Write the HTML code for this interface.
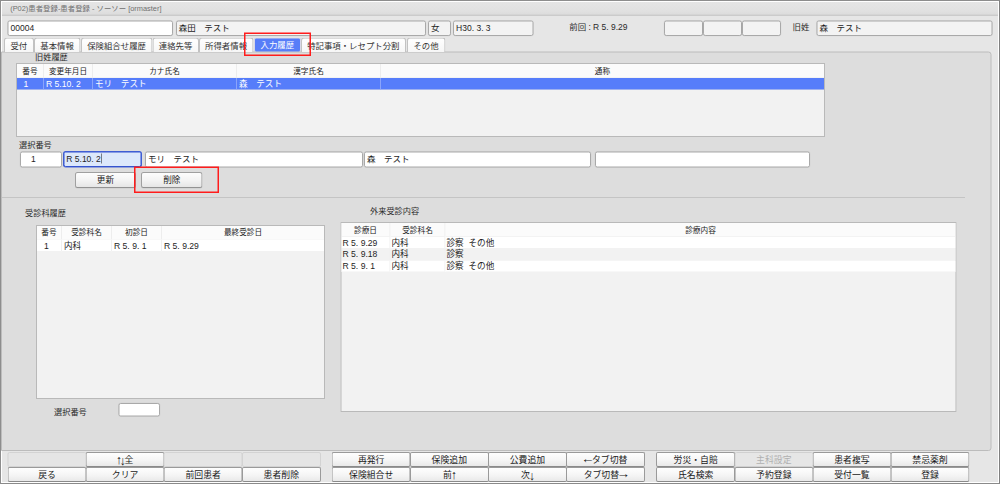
<!DOCTYPE html>
<html lang="ja"><head><meta charset="utf-8"><title>患者登録</title>
<style>
*{box-sizing:border-box;margin:0;padding:0}
html,body{width:1000px;height:484px;overflow:hidden;background:#e6e6e6}
body{position:relative;font-family:"Liberation Sans","Noto Sans CJK JP",sans-serif;font-size:8.5px;color:#1e1e1e;line-height:1}
.a{position:absolute;white-space:pre}
#root{position:absolute;left:0;top:0;width:1000px;height:484px;zoom:2;transform:scale(0.5);transform-origin:0 0}
#win{left:0;top:0;width:1000px;height:484px;border:1px solid #8d8d8d;border-right-color:#808080;border-bottom-color:#8a8a8a;background:#e6e6e6;box-shadow:inset 0 0 0 1px #fff}
#title{left:2px;top:2px;width:996px;height:14.2px;background:linear-gradient(#e5e5e5,#e1e1e1 60%,#dddddd 84%,#d4d4d4 90%,#cbcbcb 94%,#cbcbcb)}
#title span{left:8.2px;top:2.4px;color:#707070;font-size:7.4px}
.in{border:1px solid #a9a9a9;border-radius:2.2px;background:#f3f3f3;height:15.5px;line-height:12.6px;padding-left:2px;font-size:8.5px;box-shadow:0 0 0 0.5px rgba(0,0,0,0.03)}
.w{background:#fff}
.tab{top:37.3px;height:14.5px;border:1px solid #c2c2c2;border-bottom:none;border-radius:3px 3px 0 0;background:linear-gradient(#fff,#f6f6f6);text-align:center;line-height:14.6px;font-size:8.4px;color:#333}
.tab.sel{background:#577df8;color:#fff;border-color:#d8d8e8;border-radius:2px}
#panel{left:1px;top:51.5px;width:990.3px;height:399.3px;background:#dddddd;border:1px solid #bcbcbc;border-radius:0 3px 3px 0}
.tbl{background:#f2f2f2;border:1px solid #b9b9b9}
.th{top:0;height:13px;background:#fbfbfb;text-align:center;font-size:7.65px;line-height:13px;border-right:1px solid #ededed;color:#222;box-shadow:inset 0 -0.5px 0 #ebebeb}
.td{height:12px;line-height:12px;font-size:8.6px;padding-left:2px;border-right:1px solid #f0f0f0;background:#fff;box-shadow:inset 0 -0.5px 0 rgba(0,0,0,0.06)}
.lbl{font-size:8.2px;color:#2a2a2a}
.btn{height:15.8px;border:1px solid #a0a0a0;border-bottom-color:#939393;border-radius:2.5px;background:linear-gradient(#fdfdfd,#f4f4f4 50%,#e6e6e6);text-align:center;line-height:13px;font-size:8.6px;color:#1a1a1a;box-shadow:0 0.5px 0 rgba(0,0,0,0.08)}
.fb{height:15px;border:1px solid #9a9a9a;border-bottom-color:#8a8a8a;border-radius:2px;background:linear-gradient(#fefefe,#f5f5f5 55%,#e9e9e9);text-align:center;line-height:14px;font-size:8.85px;color:#1a1a1a;overflow:hidden}
.av{font-family:"Liberation Sans",sans-serif;font-size:12.4px;line-height:8px;display:inline-block;width:3.9px;text-indent:-1.1px;vertical-align:-0.8px}
.av.dn{vertical-align:-1.9px}
.ah{font-family:"Liberation Sans",sans-serif;font-size:13.5px;line-height:8px;display:inline-block;width:8.3px;text-indent:-2.6px;vertical-align:0px}
.fb.e{background:#e5e5e5;border-color:#d3d3d3}
.fb.d{background:#e6e6e6;border-color:#d0d0d0;color:#b0b0b0}
.red{border:1.75px solid #ff1c1c}
</style></head>
<body>
<div id="root">
<div class="a" id="win"></div>
<div class="a" id="title"><span class="a">(P02)患者登録-患者登録 - ソーソー [ormaster]</span></div>
<div class="a in w" style="left:7.5px;top:20.5px;width:165.3px;">00004</div>
<div class="a in " style="left:175.8px;top:20.5px;width:250.2px;">森田　テスト</div>
<div class="a in " style="left:428.0px;top:20.5px;width:23.0px;">女</div>
<div class="a in " style="left:453.1px;top:20.5px;width:80.39999999999998px;">H30. 3. 3</div>
<div class="a lbl" style="left:569.2px;top:23.5px;font-size:8.45px">前回 : R 5. 9.29</div>
<div class="a in " style="left:664.1px;top:20.5px;width:39.10000000000002px;"></div>
<div class="a in " style="left:703.1px;top:20.5px;width:39.10000000000002px;"></div>
<div class="a in " style="left:742.1px;top:20.5px;width:39.10000000000002px;"></div>
<div class="a lbl" style="left:792.5px;top:23.5px;font-size:8.45px">旧姓</div>
<div class="a in " style="left:816.5px;top:20.5px;width:176.20000000000005px;">森　テスト</div>
<div class="a" id="panel"></div>
<div class="a tab" style="left:3.8px;width:30.0px;">受付</div>
<div class="a tab" style="left:33.8px;width:46.5px;">基本情報</div>
<div class="a tab" style="left:80.8px;width:71.5px;">保険組合せ履歴</div>
<div class="a tab" style="left:152.3px;width:46.5px;">連絡先等</div>
<div class="a tab" style="left:198.8px;width:54.5px;">所得者情報</div>
<div class="a tab sel" style="left:253.8px;width:47.0px;top:37.6px;height:14.1px;line-height:14.3px;">入力履歴</div>
<div class="a tab" style="left:300.8px;width:105.0px;">特記事項・レセプト分割</div>
<div class="a tab" style="left:406.8px;width:38.5px;">その他</div>
<div class="a red" style="left:244px;top:32.5px;width:67px;height:23.5px"></div>
<div class="a lbl" style="left:35px;top:52.8px">旧姓履歴</div>
<div class="a tbl" style="left:16px;top:63px;width:809px;height:74px">
<div class="a th" style="left:0px;width:27px;height:14px;line-height:14px;">番号</div>
<div class="a th" style="left:27px;width:49px;height:14px;line-height:14px;">変更年月日</div>
<div class="a th" style="left:76px;width:144px;height:14px;line-height:14px;">カナ氏名</div>
<div class="a th" style="left:220px;width:144px;height:14px;line-height:14px;">漢字氏名</div>
<div class="a th" style="left:364px;width:443px;height:14px;line-height:14px;border-right:none;">通称</div>
<div class="a td" style="left:0px;top:14px;width:27px;height:11.6px;line-height:11.6px;padding-left:2px;background:#567dfa;color:#fff;border-right-color:#8aa4fa;padding-left:6.5px;">1</div>
<div class="a td" style="left:27px;top:14px;width:49px;height:11.6px;line-height:11.6px;padding-left:2px;background:#567dfa;color:#fff;border-right-color:#8aa4fa;">R 5.10. 2</div>
<div class="a td" style="left:76px;top:14px;width:144px;height:11.6px;line-height:11.6px;padding-left:2px;background:#567dfa;color:#fff;border-right-color:#8aa4fa;">モリ　テスト</div>
<div class="a td" style="left:220px;top:14px;width:144px;height:11.6px;line-height:11.6px;padding-left:2px;background:#567dfa;color:#fff;border-right-color:#8aa4fa;">森　テスト</div>
<div class="a td" style="left:364px;top:14px;width:443px;height:11.6px;line-height:11.6px;padding-left:2px;background:#567dfa;color:#fff;border-right-color:#8aa4fa;border-right:none;"></div>
</div>
<div class="a lbl" style="left:19px;top:140.5px">選択番号</div>
<div class="a in w" style="left:20.1px;top:151.6px;width:41.8px;padding-left:10px;height:15.8px;line-height:13px;">1</div>
<div class="a in " style="left:63.3px;top:151.6px;width:78.2px;background:#dce8fb;border-color:#3553cf;box-shadow:0 0 0 0.5px #4a68d8;height:15.4px;line-height:13px;">R 5.10. 2<span style="display:inline-block;width:0.7px;height:10px;background:#111;vertical-align:-2px;margin-left:0px"></span></div>
<div class="a in w" style="left:145.0px;top:151.6px;width:217.8px;height:15.8px;line-height:13px;">モリ　テスト</div>
<div class="a in w" style="left:363.9px;top:151.6px;width:227.10000000000002px;height:15.8px;line-height:13px;">森　テスト</div>
<div class="a in w" style="left:594.8px;top:151.6px;width:215.20000000000005px;height:15.8px;"></div>
<div class="a btn" style="left:74.8px;top:172px;width:61.2px">更新</div>
<div class="a btn" style="left:141.2px;top:172px;width:61.3px">削除</div>
<div class="a red" style="left:134px;top:166.5px;width:85px;height:26.5px"></div>
<div class="a" style="left:2px;top:197px;width:963px;height:1px;background:#c4c4c4"></div>
<div class="a lbl" style="left:25px;top:209.2px">受診科履歴</div>
<div class="a tbl" style="left:36px;top:225px;width:289px;height:174px">
<div class="a th" style="left:0px;width:25px;height:13.3px;line-height:13.3px;">番号</div>
<div class="a th" style="left:25px;width:50px;height:13.3px;line-height:13.3px;">受診科名</div>
<div class="a th" style="left:75px;width:50px;height:13.3px;line-height:13.3px;">初診日</div>
<div class="a th" style="left:125px;width:162px;height:13.3px;line-height:13.3px;border-right:none;">最終受診日</div>
<div class="a td" style="left:0px;top:13.3px;width:25px;height:12px;line-height:12px;padding-left:2px;padding-left:7px;">1</div>
<div class="a td" style="left:25px;top:13.3px;width:50px;height:12px;line-height:12px;padding-left:2px;">内科</div>
<div class="a td" style="left:75px;top:13.3px;width:50px;height:12px;line-height:12px;padding-left:2px;">R 5. 9. 1</div>
<div class="a td" style="left:125px;top:13.3px;width:162px;height:12px;line-height:12px;padding-left:2px;border-right:none;">R 5. 9.29</div>
</div>
<div class="a lbl" style="left:54px;top:407.5px">選択番号</div>
<div class="a in w" style="left:118.5px;top:403.2px;width:41.5px;height:13.5px;"></div>
<div class="a lbl" style="left:370px;top:206.5px">外来受診内容</div>
<div class="a tbl" style="left:340.5px;top:222px;width:616px;height:190px">
<div class="a th" style="left:0px;width:49px;height:13.8px;line-height:13.8px;">診療日</div>
<div class="a th" style="left:49px;width:55px;height:13.8px;line-height:13.8px;">受診科名</div>
<div class="a th" style="left:104px;width:510px;height:13.8px;line-height:13.8px;border-right:none;">診療内容</div>
<div class="a td" style="left:0px;top:13.8px;width:49px;height:11.8px;line-height:11.8px;padding-left:1px;">R 5. 9.29</div>
<div class="a td" style="left:49px;top:13.8px;width:55px;height:11.8px;line-height:11.8px;padding-left:1px;">内科</div>
<div class="a td" style="left:104px;top:13.8px;width:510px;height:11.8px;line-height:11.8px;padding-left:1px;border-right:none;">診察  その他</div>
<div class="a td" style="left:0px;top:25.6px;width:49px;height:11.8px;line-height:11.8px;padding-left:1px;background:#f2f2f2;">R 5. 9.18</div>
<div class="a td" style="left:49px;top:25.6px;width:55px;height:11.8px;line-height:11.8px;padding-left:1px;background:#f2f2f2;">内科</div>
<div class="a td" style="left:104px;top:25.6px;width:510px;height:11.8px;line-height:11.8px;padding-left:1px;background:#f2f2f2;border-right:none;">診察</div>
<div class="a td" style="left:0px;top:37.400000000000006px;width:49px;height:11.8px;line-height:11.8px;padding-left:1px;">R 5. 9. 1</div>
<div class="a td" style="left:49px;top:37.400000000000006px;width:55px;height:11.8px;line-height:11.8px;padding-left:1px;">内科</div>
<div class="a td" style="left:104px;top:37.400000000000006px;width:510px;height:11.8px;line-height:11.8px;padding-left:1px;border-right:none;">診察  その他</div>
</div>
<div class="a fb e" style="left:7.5px;top:452px;width:79px"></div>
<div class="a fb" style="left:7.5px;top:467.2px;width:79px;height:14.6px;line-height:13.2px">戻る</div>
<div class="a fb" style="left:85.6px;top:452px;width:79px"><span class="av">↑</span><span class="av dn">↓</span>全</div>
<div class="a fb" style="left:85.6px;top:467.2px;width:79px;height:14.6px;line-height:13.2px">クリア</div>
<div class="a fb e" style="left:163.7px;top:452px;width:79px"></div>
<div class="a fb" style="left:163.7px;top:467.2px;width:79px;height:14.6px;line-height:13.2px">前回患者</div>
<div class="a fb e" style="left:241.8px;top:452px;width:79px"></div>
<div class="a fb" style="left:241.8px;top:467.2px;width:79px;height:14.6px;line-height:13.2px">患者削除</div>
<div class="a fb" style="left:331.7px;top:452px;width:79px">再発行</div>
<div class="a fb" style="left:331.7px;top:467.2px;width:79px;height:14.6px;line-height:13.2px">保険組合せ</div>
<div class="a fb" style="left:409.8px;top:452px;width:79px">保険追加</div>
<div class="a fb" style="left:409.8px;top:467.2px;width:79px;height:14.6px;line-height:13.2px">前<span class="av">↑</span></div>
<div class="a fb" style="left:487.9px;top:452px;width:79px">公費追加</div>
<div class="a fb" style="left:487.9px;top:467.2px;width:79px;height:14.6px;line-height:13.2px">次<span class="av dn">↓</span></div>
<div class="a fb" style="left:566.0px;top:452px;width:79px"><span class="ah">←</span>タブ切替</div>
<div class="a fb" style="left:566.0px;top:467.2px;width:79px;height:14.6px;line-height:13.2px">タブ切替<span class="ah">→</span></div>
<div class="a fb" style="left:656.2px;top:452px;width:79px">労災・自賠</div>
<div class="a fb" style="left:656.2px;top:467.2px;width:79px;height:14.6px;line-height:13.2px">氏名検索</div>
<div class="a fb d" style="left:734.3px;top:452px;width:79px">主科設定</div>
<div class="a fb" style="left:734.3px;top:467.2px;width:79px;height:14.6px;line-height:13.2px">予約登録</div>
<div class="a fb" style="left:812.4px;top:452px;width:79px">患者複写</div>
<div class="a fb" style="left:812.4px;top:467.2px;width:79px;height:14.6px;line-height:13.2px">受付一覧</div>
<div class="a fb" style="left:890.5px;top:452px;width:79px">禁忌薬剤</div>
<div class="a fb" style="left:890.5px;top:467.2px;width:79px;height:14.6px;line-height:13.2px">登録</div>
</div>
</body></html>
